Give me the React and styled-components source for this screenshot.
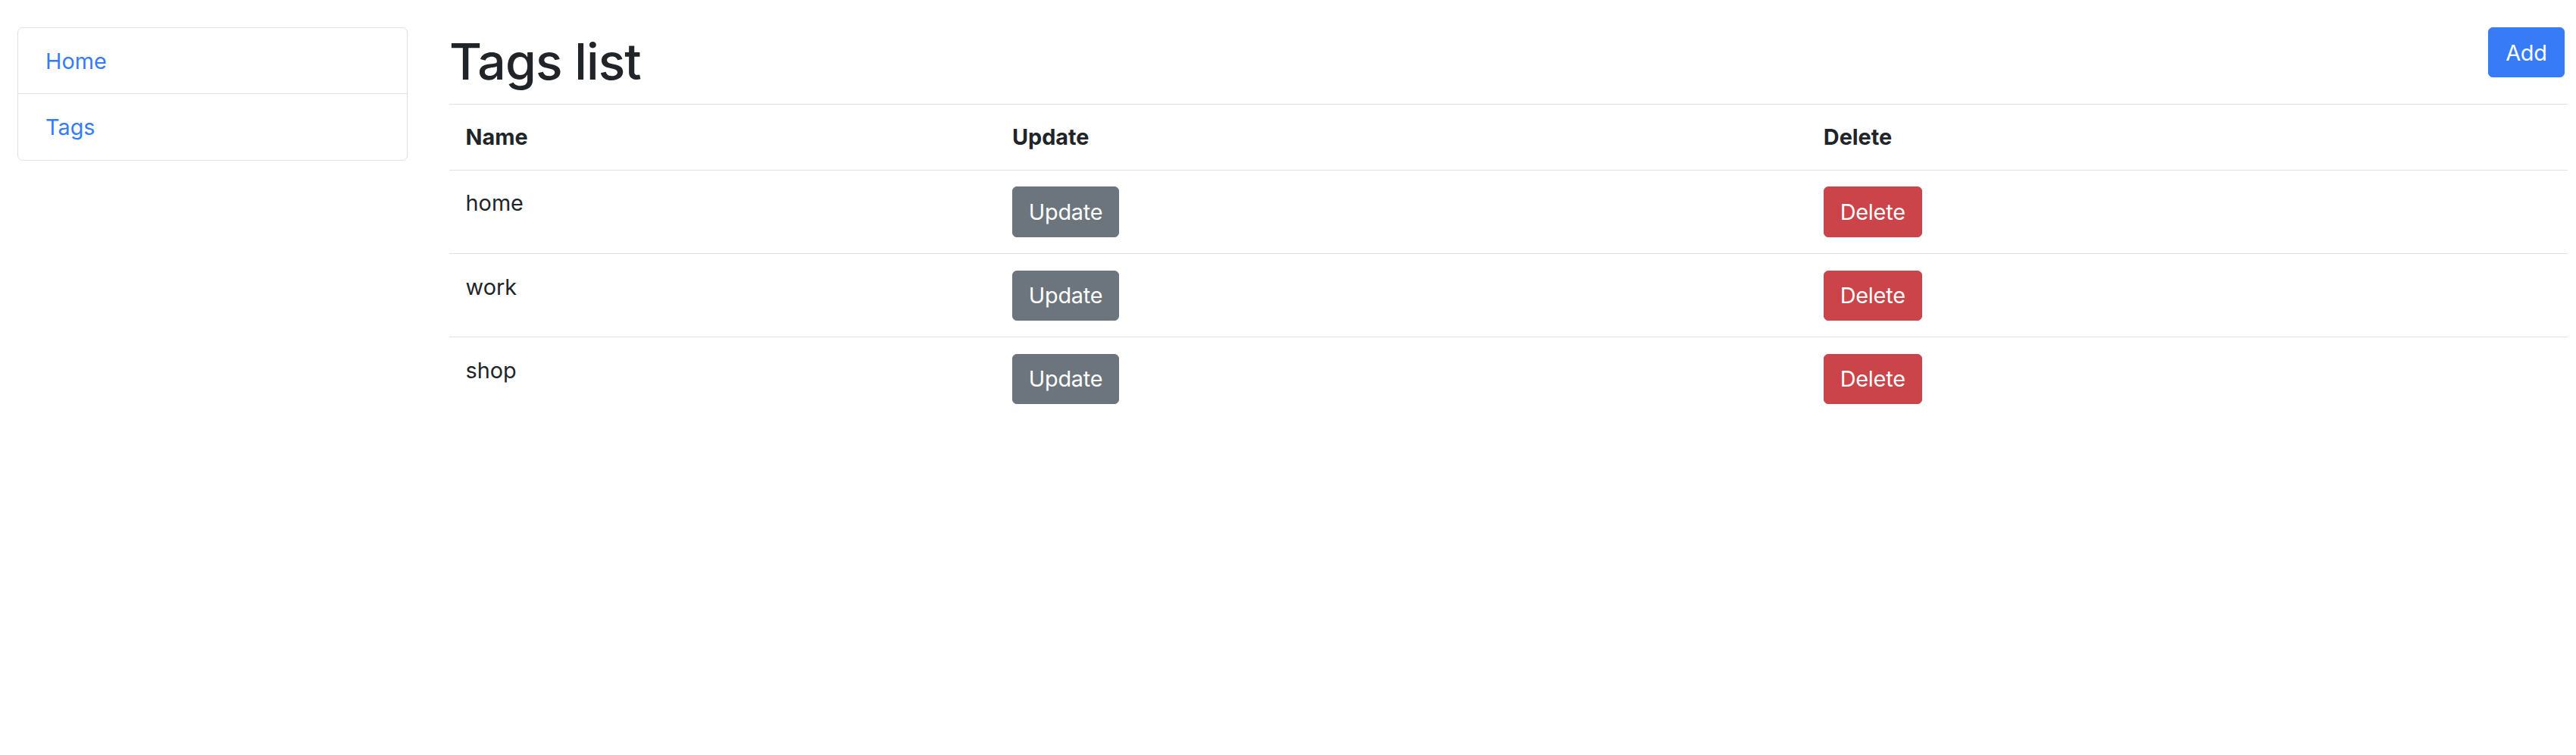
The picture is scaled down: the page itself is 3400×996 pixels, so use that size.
import React from "react";
import styled, { createGlobalStyle } from "styled-components";

const GlobalStyle = createGlobalStyle`
  html, body {
    margin: 0;
    padding: 0;
    background: #ffffff;
  }
  body {
    font-family: Inter, "Noto Sans", "Liberation Sans", sans-serif;
    font-size: 28.8px;
    line-height: 43.2px;
    color: #212529;
  }
  * { box-sizing: border-box; }
`;

const Page = styled.div`
  display: flex;
  align-items: flex-start;
  gap: 55px;
  padding: 36px 11px 0 23px;
`;

const Sidebar = styled.nav`
  flex: 0 0 515px;
  width: 515px;
  display: flex;
  flex-direction: column;
  border: 1px solid #dfdfdf;
  border-radius: 7px;
`;

const NavItem = styled.a`
  display: block;
  padding: 21.6px 36px;
  line-height: 43.2px;
  color: #367cf6;
  text-decoration: none;
  & + & {
    border-top: 1px solid #dfdfdf;
  }
`;

const Main = styled.main`
  flex: 1 1 auto;
  min-width: 0;
`;

const HeaderRow = styled.div`
  display: flex;
  justify-content: space-between;
  align-items: flex-start;
  padding-right: 4px;
`;

const Title = styled.h1`
  margin: 6px 0 16px;
  font-size: 66px;
  line-height: 79px;
  font-weight: 500;
  letter-spacing: -0.9px;
  color: #212529;
`;

const Button = styled.button`
  font-family: inherit;
  font-size: 28.8px;
  line-height: 43.2px;
  font-weight: 400;
  letter-spacing: -0.2px;
  padding: 10.6px ${(p) => (p.$wide ? "22.4px" : "20.8px")};
  border: 1px solid ${(p) => p.$color};
  background: ${(p) => p.$color};
  color: #ffffff;
  border-radius: 6px;
  cursor: pointer;
`;

const Table = styled.table`
  width: 100%;
  border-collapse: collapse;
  table-layout: fixed;
`;

const Th = styled.th`
  text-align: left;
  font-weight: 700;
  padding: 21.4px 21.6px;
  border-top: 1px solid #dee2e6;
  vertical-align: top;
  width: ${(p) => p.$w || "auto"};
`;

const Td = styled.td`
  padding: 21.4px 21.6px;
  border-top: 1px solid #dee2e6;
  vertical-align: top;
`;

const COLORS = {
  primary: "#377cf6",
  secondary: "#6c757d",
  danger: "#cb444a",
};

const tags = ["home", "work", "shop"];

export default function App() {
  return (
    <>
      <GlobalStyle />
      <Page>
        <Sidebar>
          <NavItem href="#">Home</NavItem>
          <NavItem href="#">Tags</NavItem>
        </Sidebar>
        <Main>
          <HeaderRow>
            <Title>Tags list</Title>
            <Button $color={COLORS.primary} $wide>Add</Button>
          </HeaderRow>
          <Table>
            <thead>
              <tr>
                <Th $w="25.8%">Name</Th>
                <Th $w="38.3%">Update</Th>
                <Th>Delete</Th>
              </tr>
            </thead>
            <tbody>
              {tags.map((t) => (
                <tr key={t}>
                  <Td>{t}</Td>
                  <Td>
                    <Button $color={COLORS.secondary}>Update</Button>
                  </Td>
                  <Td>
                    <Button $color={COLORS.danger}>Delete</Button>
                  </Td>
                </tr>
              ))}
            </tbody>
          </Table>
        </Main>
      </Page>
    </>
  );
}
